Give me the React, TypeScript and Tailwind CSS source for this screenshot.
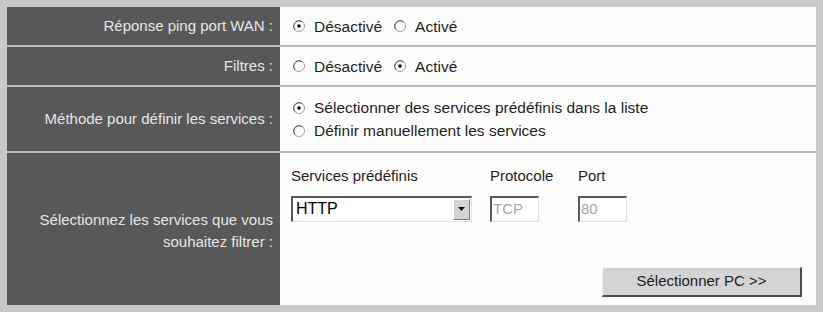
import React from "react";

const Radio = ({ checked }: { checked?: boolean }) => (
  <svg width="12" height="12" viewBox="0 0 12 12" className="shrink-0">
    <circle cx="6" cy="6" r="5.5" fill="#ffffff" stroke="#a0a0a0" />
    <path d="M2 9.5 A5 5 0 0 1 2.5 2.5 A5 5 0 0 1 9.5 2" fill="none" stroke="#555" strokeWidth="1" />
    {checked && <circle cx="6" cy="6" r="1.8" fill="#111" />}
  </svg>
);

const Option = ({ label, checked }: { label: string; checked?: boolean }) => (
  <label className="flex items-center gap-[9px] leading-[23px]">
    <Radio checked={checked} />
    <span>{label}</span>
  </label>
);

const Row = ({
  label,
  height,
  last,
  children,
}: {
  label: React.ReactNode;
  height: string;
  last?: boolean;
  children: React.ReactNode;
}) => (
  <div className={`flex ${height} ${last ? "" : "border-b-2 border-[#bcbcbc]"}`}>
    <div className="w-[273px] shrink-0 bg-[#585858] text-[#e6e6e6] text-[15px] flex items-center justify-end text-right pr-[7px] leading-[22px]">
      {label}
    </div>
    <div className="flex-1 bg-[#fdfdfd] pl-[13px] flex flex-col justify-center text-[15.5px]">{children}</div>
  </div>
);

export default function App() {
  return (
    <div className="w-[823px] h-[312px] bg-[#c8c8c8] pt-[7px] pl-[7px] font-['Liberation_Sans',Arial,sans-serif] text-[#1e1e1e]">
      <div className="w-[809px] flex flex-col">
        <Row label="Réponse ping port WAN :" height="h-[40px]">
          <div className="flex items-center gap-[12px]">
            <Option label="Désactivé" checked />
            <Option label="Activé" />
          </div>
        </Row>
        <Row label="Filtres :" height="h-[40px]">
          <div className="flex items-center gap-[12px]">
            <Option label="Désactivé" />
            <Option label="Activé" checked />
          </div>
        </Row>
        <Row label="Méthode pour définir les services :" height="h-[66px]">
          <div className="flex flex-col">
            <Option label="Sélectionner des services prédéfinis dans la liste" checked />
            <Option label="Définir manuellement les services" />
          </div>
        </Row>
        <Row
          label={
            <span className="pt-[4px]">
              Sélectionnez les services que vous
              <br />
              souhaitez filtrer :
            </span>
          }
          height="h-[152px]"
          last
        >
          <div className="flex flex-col h-full justify-start text-[15px]">
            <div className="flex pt-[12px] -ml-[2px]">
              <div className="w-[199px] flex flex-col gap-[8px]">
                <span>Services prédéfinis</span>
                <div className="w-[181px] h-[26px] flex items-center border-t-2 border-l-2 border-[#5a5a5a] border-b border-r border-b-[#e0e0e0] border-r-[#e0e0e0] bg-white">
                  <span className="flex-1 pl-[3px] text-[16px] text-black">HTTP</span>
                  <div className="w-[17px] h-[21px] mr-[1px] bg-[#d4d4d4] border-t border-l border-white border-b border-r border-b-[#777] border-r-[#777] flex items-center justify-center">
                    <svg width="7" height="4" viewBox="0 0 7 4">
                      <path d="M0 0 H7 L3.5 4 Z" fill="#111" />
                    </svg>
                  </div>
                </div>
              </div>
              <div className="w-[88px] flex flex-col gap-[8px]">
                <span>Protocole</span>
                <div className="w-[49px] h-[26px] flex items-center border-t-2 border-l-2 border-[#5a5a5a] border-b border-r border-b-[#e0e0e0] border-r-[#e0e0e0] bg-white pl-[1px] text-[#a8a8a8]">
                  TCP
                </div>
              </div>
              <div className="flex flex-col gap-[8px]">
                <span>Port</span>
                <div className="w-[49px] h-[26px] flex items-center border-t-2 border-l-2 border-[#5a5a5a] border-b border-r border-b-[#e0e0e0] border-r-[#e0e0e0] bg-white pl-[1px] text-[#a8a8a8]">
                  80
                </div>
              </div>
            </div>
            <div className="flex justify-end pr-[14px] mt-[45px]">
              <button className="w-[200px] h-[30px] bg-[#d4d4d4] border-t border-l border-[#f4f4f4] border-b-2 border-r-2 border-b-[#4a4a4a] border-r-[#4a4a4a] text-[15px] text-[#1e1e1e]">
                Sélectionner PC &gt;&gt;
              </button>
            </div>
          </div>
        </Row>
      </div>
    </div>
  );
}
